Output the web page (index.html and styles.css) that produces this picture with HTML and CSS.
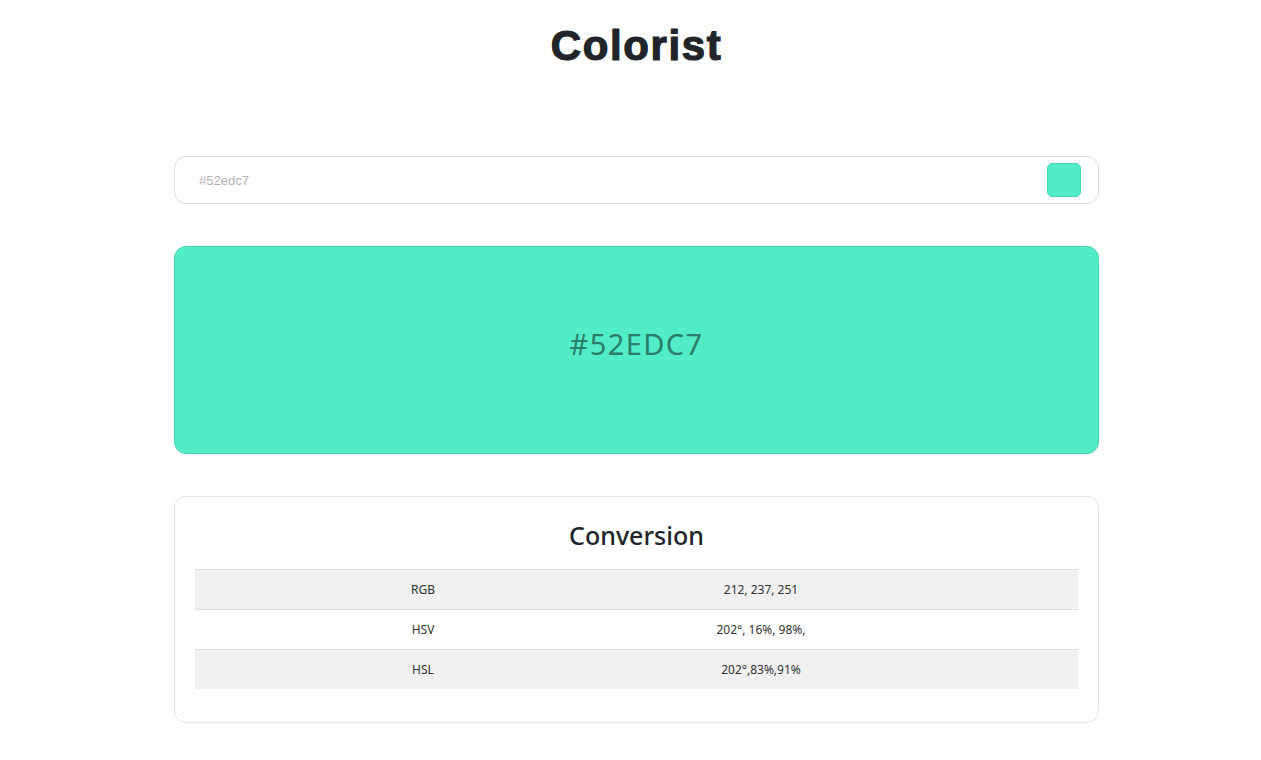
FILE: index.html
```html
<!DOCTYPE html>
<html lang="en">
<head>
<meta charset="utf-8">
<title>Colorist</title>
<link rel="stylesheet" href="styles.css">
</head>
<body>
<main class="page">
  <h1 class="title">Colorist</h1>
  <div class="search">
    <input class="search-input" type="text" placeholder="#52edc7">
    <span class="search-swatch"></span>
  </div>
  <section class="preview">
    <span class="preview-code">#52EDC7</span>
  </section>
  <section class="conversion">
    <h2 class="conversion-title">Conversion</h2>
    <div class="table">
      <div class="row row-alt"><span class="cell-name">RGB</span><span class="cell-value">212, 237, 251</span></div>
      <div class="row"><span class="cell-name">HSV</span><span class="cell-value">202°, 16%, 98%,</span></div>
      <div class="row row-alt"><span class="cell-name">HSL</span><span class="cell-value">202°,83%,91%</span></div>
    </div>
  </section>
</main>
</body>
</html>
```
FILE: styles.css
```css
* { box-sizing: border-box; }
html, body { margin: 0; padding: 0; background: #fff; }
body { font-family: "Noto Sans", "Open Sans", sans-serif; color: #212529; }
.page {
  width: 925px;
  margin-left: 174px;
  padding-top: 20px;
}
.title {
  margin: 0;
  text-align: center;
  font-family: "Liberation Sans", Arial, sans-serif;
  font-weight: 700;
  font-size: 42px;
  line-height: 52px;
  letter-spacing: 1.6px;
  -webkit-text-stroke: 1.2px #212529;
  color: #212529;
}
.search {
  margin-top: 84px;
  height: 48px;
  border: 1px solid #dedede;
  border-radius: 12px;
  display: flex;
  align-items: center;
  padding: 0 17px 0 24px;
}
.search-input {
  flex: 1;
  border: none;
  outline: none;
  background: transparent;
  font-family: "Liberation Sans", Arial, sans-serif;
  font-size: 13px;
  color: #555;
  padding: 0;
}
.search-input::placeholder { color: #b3b3b3; }
.search-swatch {
  width: 34px;
  height: 34px;
  border-radius: 5px;
  background: #52edc7;
  border: 1px solid #46d6b2;
}
.preview {
  margin-top: 42px;
  height: 208px;
  border-radius: 12px;
  background: #52edc7;
  border: 1px solid #48d4b1;
  display: flex;
  align-items: center;
  justify-content: center;
}
.preview-code {
  font-size: 29px;
  color: #2a7d68;
  letter-spacing: 1.4px;
  margin-top: -13px;
}
.conversion {
  margin-top: 42px;
  border: 1px solid #e3e3e3;
  border-radius: 12px;
  padding: 20px 20px 33px;
}
.conversion-title {
  margin: 0 0 16px;
  text-align: center;
  font-size: 25px;
  font-weight: 500;
  line-height: 36px;
  color: #212529;
}
.row {
  display: grid;
  grid-template-columns: 456px 220px 1fr;
  height: 40px;
  align-items: center;
  border-top: 1px solid #dcdcdc;
  font-size: 12px;
  color: #333;
}
.row-alt { background: #f1f1f1; }
.cell-name, .cell-value { text-align: center; }
```
